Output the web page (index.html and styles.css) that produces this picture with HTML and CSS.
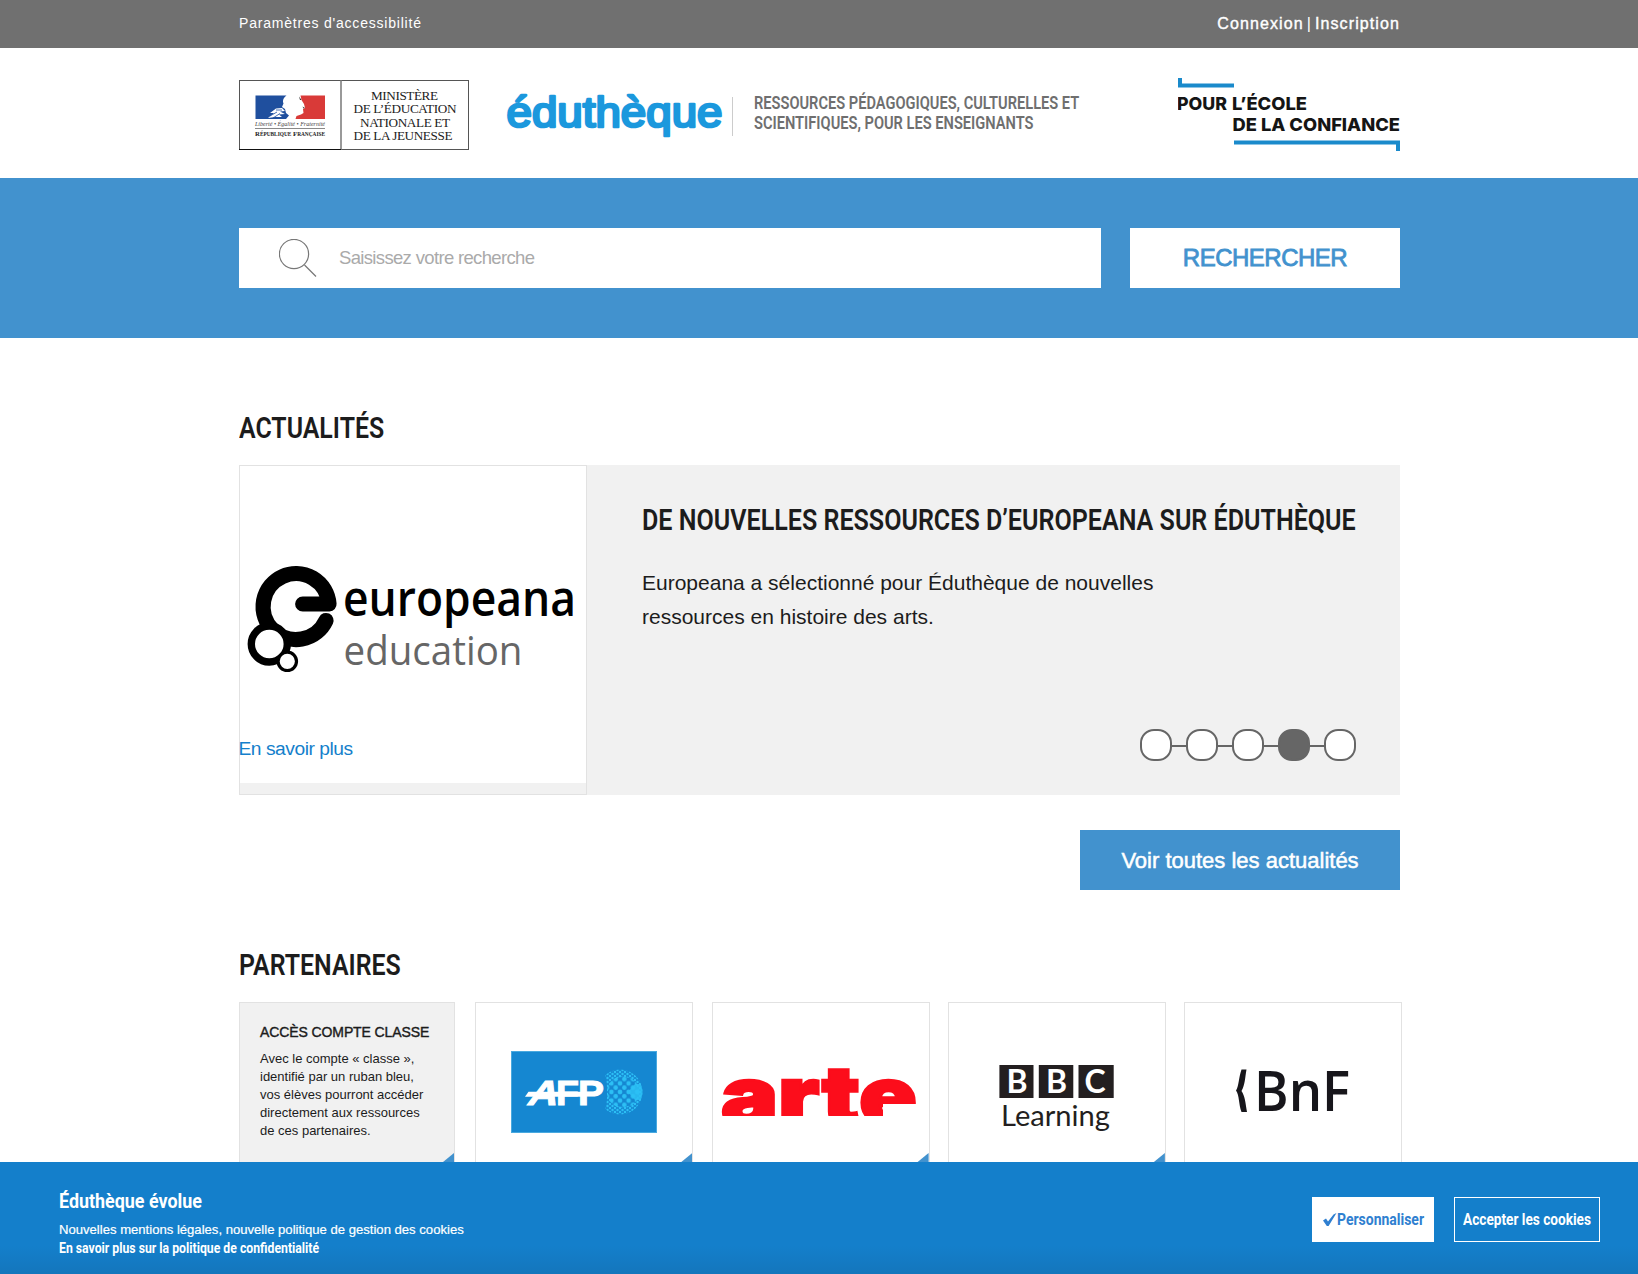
FILE: index.html
```html
<!DOCTYPE html>
<html lang="fr">
<head>
<meta charset="utf-8">
<title>Éduthèque</title>
<link rel="stylesheet" href="styles.css">
</head>
<body>
<div class="topbar">
  <div class="wrap topbar-row">
    <a class="access">Paramètres d'accessibilité</a>
    <div class="account"><a>Connexion</a><span class="bar">|</span><a>Inscription</a></div>
  </div>
</div>

<header class="wrap header">
  <svg class="ministry" width="230" height="70" viewBox="0 0 230 70">
    <rect x=".5" y=".5" width="229" height="69" fill="#fff" stroke="#555"/>
    <path d="M102 0V70" stroke="#777" stroke-width="1.500" fill="none"/>
    <path d="M0 69.500H102" stroke="#111"/>
    <path d="M16.500 15.500H47.500C44 18 43.500 21 44.500 23.500L43 27L46 29L47 33L50 35.500L47 39H16.500Z" fill="#1f4f9e"/>
    <path d="M86 15.500H61.500L62.500 20L65 24L66 28L64 29L64.500 33L62 34.500L57.500 36L56.500 39H86Z" fill="#d93a38"/>
    <path d="M29 38L35 33L31 33L37 28.500L43 28L46 31L41 31.500L46 34L40 34.500L43 37L36 37Z" fill="#fff"/>
    <path d="M31 36L38 32M34 38L41 33.500M37 30L43 30" stroke="#1f4f9e" stroke-width=".8"/>
    <path d="M60 16.500L62.500 20L61 20ZM63.500 26.500L66 28L64.500 28.500Z" fill="#333"/>
    <text class="serif" x="16" y="45.500" font-size="5.500" font-style="italic" textLength="70" lengthAdjust="spacingAndGlyphs" fill="#444">Liberté • Égalité • Fraternité</text>
    <path d="M16 48.500H86" stroke="#888"/>
    <text class="serif" x="16" y="56" font-weight="700" font-size="7" textLength="70" lengthAdjust="spacingAndGlyphs" fill="#222">R<tspan font-size="5.500">ÉPUBLIQUE</tspan> F<tspan font-size="5.500">RANÇAISE</tspan></text>
    <g class="serif" font-size="13.200" fill="#1c1c1c">
      <text x="132" y="20" textLength="67">MINISTÈRE</text>
      <text x="114.500" y="33.300" textLength="103">DE L’ÉDUCATION</text>
      <text x="121" y="46.500" textLength="90">NATIONALE ET</text>
      <text x="114.500" y="59.500" textLength="99">DE LA JEUNESSE</text>
    </g>
  </svg>
  <svg class="brand" width="220" height="64" viewBox="0 0 220 64">
    <text class="round" x="2.500" y="49" font-size="42" textLength="216" lengthAdjust="spacingAndGlyphs">éduthèque</text>
  </svg>
  <span class="separator"></span>
  <p class="tagline"><span>RESSOURCES PÉDAGOGIQUES, CULTURELLES ET</span><span>SCIENTIFIQUES, POUR LES ENSEIGNANTS</span></p>
  <svg class="trust" width="222" height="74" viewBox="0 0 222 74">
    <path d="M0 0H4V5.500H56V9.500H0Z" fill="#1a8acb"/>
    <path d="M56 62.500H222V73H218V66.500H56Z" fill="#1a8acb"/>
    <g class="inter" font-size="17.500" font-weight="800" fill="#151515">
      <text x="-1" y="31.500" textLength="50" lengthAdjust="spacingAndGlyphs">POUR</text>
      <text x="54" y="31.500" textLength="75" lengthAdjust="spacingAndGlyphs">L’ÉCOLE</text>
      <text x="54.500" y="53" textLength="167.500" lengthAdjust="spacingAndGlyphs">DE LA CONFIANCE</text>
    </g>
  </svg>
</header>

<section class="search">
  <div class="wrap search-row">
    <div class="field">
      <svg width="38" height="38" viewBox="0 0 38 38" fill="none" stroke="#777" stroke-width="1.200"><circle cx="15" cy="15" r="14.600"/><path d="M25.500 26L37 37.500"/></svg>
      <span class="placeholder">Saisissez votre recherche</span>
    </div>
    <button class="go">RECHERCHER</button>
  </div>
</section>

<main class="wrap">
  <h2 class="heading first">ACTUALITÉS</h2>
  <article class="news">
    <div class="news-media">
      <div class="news-picture">
        <svg width="346" height="270" viewBox="0 0 346 270">
          <path d="M86 154.500A33 33 0 1 1 89 138H62.700" fill="none" stroke="#000" stroke-width="15.200" stroke-linecap="round" stroke-linejoin="round"/>
          <circle cx="29.300" cy="178" r="18" fill="#fff" stroke="#000" stroke-width="7.400"/>
          <circle cx="47.300" cy="195.300" r="9.200" fill="#fff" stroke="#000" stroke-width="3.200"/>
          <text class="opensans" x="103" y="149.500" font-size="48" font-weight="600" textLength="233" lengthAdjust="spacingAndGlyphs">europeana</text>
          <text class="opensans" x="103.500" y="199" font-size="41" font-weight="500" fill="#666" textLength="179" lengthAdjust="spacingAndGlyphs">education</text>
        </svg>
        <a class="more">En savoir plus</a>
      </div>
    </div>
    <div class="news-body">
      <h3 class="news-title">DE NOUVELLES RESSOURCES D’EUROPEANA SUR ÉDUTHÈQUE</h3>
      <p class="news-text">Europeana a sélectionné pour Éduthèque de nouvelles<br>ressources en histoire des arts.</p>
      <div class="dots"><i></i><b></b><i></i><b></b><i></i><b></b><i class="on"></i><b></b><i></i></div>
    </div>
  </article>
  <div class="all"><a class="all-link">Voir toutes les actualités</a></div>

  <h2 class="heading">PARTENAIRES</h2>
  <div class="partners">
    <div class="card intro ribbon">
      <h4>ACCÈS COMPTE CLASSE</h4>
      <p>Avec le compte « classe »,<br>identifié par un ruban bleu,<br>vos élèves pourront accéder<br>directement aux ressources<br>de ces partenaires.</p>
    </div>
    <div class="card ribbon">
      <svg width="216" height="160" viewBox="0 0 216 160">
        <defs>
          <pattern id="dots" width="8.600" height="8.600" patternUnits="userSpaceOnUse" x="144" y="89">
            <g fill="#2cc0f5"><circle cx="4.300" cy="4.300" r="2.300"/><circle cx="0" cy="0" r="2.300"/><circle cx="8.600" cy="0" r="2.300"/><circle cx="0" cy="8.600" r="2.300"/><circle cx="8.600" cy="8.600" r="2.300"/></g>
          </pattern>
          <pattern id="fine" width="5" height="4" patternUnits="userSpaceOnUse" x="144" y="89">
            <g fill="#2cc0f5"><circle cx="2.500" cy="2" r="1.200"/><circle cx="0" cy="0" r="1.200"/><circle cx="5" cy="0" r="1.200"/><circle cx="0" cy="4" r="1.200"/><circle cx="5" cy="4" r="1.200"/></g>
          </pattern>
          <clipPath id="globe"><path d="M128 60H170V118H128L131 95V84Z"/></clipPath>
        </defs>
        <rect x="35.500" y="48.500" width="145" height="81" fill="#1587d1" stroke="#49a9df"/>
        <g clip-path="url(#globe)">
          <circle cx="144" cy="89" r="22.500" fill="url(#fine)"/>
          <circle cx="147" cy="89" r="15" fill="#1587d1"/>
          <circle cx="147" cy="89" r="16" fill="url(#dots)"/>
        </g>
        <path d="M152 89L159 81H164.500Q168.500 89 164.500 97H159Z" fill="#2cc0f5" opacity=".85"/>
        <path d="M49 93.700L52.500 88.700H110V93.700Z" fill="#fff"/>
        <g class="sans" fill="#fff" stroke="#fff" font-weight="700" font-size="35">
          <text transform="translate(50 101.500) skewX(-18)" textLength="30" lengthAdjust="spacingAndGlyphs">A</text>
          <text x="80" y="101.500" textLength="23" lengthAdjust="spacingAndGlyphs">F</text>
          <text x="102" y="101.500" textLength="26" lengthAdjust="spacingAndGlyphs">P</text>
        </g>
      </svg>
    </div>
    <div class="card ribbon">
      <svg width="216" height="160" viewBox="0 0 216 160">
        <clipPath id="cut"><path d="M0 0H216V101H170V113H0Z"/></clipPath>
        <g clip-path="url(#cut)"><text class="inter" x="8" y="121" font-size="80" font-weight="900" fill="#fc0d1b" stroke="#fc0d1b" stroke-width="2.500" textLength="196" lengthAdjust="spacingAndGlyphs">arte</text></g>
      </svg>
    </div>
    <div class="card ribbon">
      <svg width="216" height="160" viewBox="0 0 216 160">
        <path d="M50.400 62H84.500V95H50.400ZM89.800 62H124.300V95H89.800ZM129.500 62H164.700V95H129.500Z" fill="#231f20"/>
        <g class="lato" font-weight="700" font-size="32" fill="#fff" text-anchor="middle">
          <text x="68" y="90.300">B</text><text x="107.500" y="90.300">B</text><text x="146" y="90.300">C</text>
        </g>
        <text class="lato" x="52" y="122.500" font-size="29" fill="#231f20" textLength="109" lengthAdjust="spacingAndGlyphs">Learning</text>
      </svg>
    </div>
    <div class="card">
      <svg width="216" height="160" viewBox="0 0 216 160">
        <path d="M61.500 66.500H56.500C53.500 75 54 83 51 87.500C54.500 92 53.500 101 56.500 109H62C60.500 100 60 93 56.500 88C60 82 60 75 61.500 66.500Z" fill="#17161b"/>
        <text class="opensans" x="69" y="108" font-size="56" font-weight="600" fill="#17161b" textLength="96" lengthAdjust="spacingAndGlyphs">BnF</text>
      </svg>
    </div>
  </div>
</main>

<footer class="cookies">
  <div class="cookies-text">
    <strong class="cookies-title">Éduthèque évolue</strong>
    <span class="cookies-line">Nouvelles mentions légales, nouvelle politique de gestion des cookies</span>
    <a class="cookies-link">En savoir plus sur la politique de confidentialité</a>
  </div>
  <div class="cookies-actions">
    <button class="btn solid"><svg width="14" height="14" viewBox="0 0 14 14"><path d="M0 7.500L3 5.500L5 8.500L10.500 1.500L13.500 0L5.600 13H3.800Z" fill="#2f7fd0"/></svg><span class="customize">Personnaliser</span></button>
    <button class="btn outline"><span class="accept">Accepter les cookies</span></button>
  </div>
</footer>
</body>
</html>
```
FILE: styles.css
```css
* { box-sizing: border-box; }
body { margin: 0; height: 1274px; overflow: hidden; background: #fff; color: #1c1c1c; font-family: "Liberation Sans", Arial, sans-serif; }
h2, h3, h4, p { margin: 0; font-weight: 400; }
button { font: inherit; border: 0; padding: 0; }
svg { display: block; flex-shrink: 0; }
.wrap { width: 1161px; margin: 0 0 0 239px; }

.sans { font-family: "Liberation Sans", sans-serif; }
.serif { font-family: "Liberation Serif", serif; }
.inter { font-family: Inter, sans-serif; }
.lato { font-family: Lato, sans-serif; }
.opensans { font-family: "Open Sans", sans-serif; }
.round { font-family: "Liberation Sans", sans-serif; fill: #1b98dd; stroke: #1b98dd; stroke-width: 2.6; stroke-linejoin: round; }

.topbar { height: 48px; background: #707070; color: #fff; }
.topbar-row { display: flex; justify-content: space-between; align-items: center; height: 46px; }
.access { font-size: 14px; letter-spacing: .79px; }
.account { display: flex; font-size: 16px; letter-spacing: 1.1px; padding-top: 1px; -webkit-text-stroke: .4px; }
.bar { margin: 0 3px; -webkit-text-stroke: 0; }

.header { display: flex; height: 130px; padding-top: 30px; }
.ministry { margin-top: 2px; }
.brand { margin-left: 35px; }
.separator { width: 1px; height: 39px; margin: 19px 0 0 8px; background: #ccc; }
.tagline { margin: 15px 0 0 21px; width: 330px; font: 600 18px/20px Roboto, sans-serif; color: #6f6f6f; white-space: nowrap; }
.tagline span { display: block; transform: scaleX(.813); transform-origin: left; }
.trust { margin-left: auto; }

.search { height: 160px; padding-top: 50px; background: #4292ce; }
.search-row { display: flex; justify-content: space-between; }
.field { display: flex; align-items: center; gap: 22px; width: 862px; height: 60px; padding-left: 40px; background: #fff; }
.placeholder { font-size: 18.5px; letter-spacing: -.66px; color: #aaa; }
.go { width: 270px; height: 60px; background: #fff; color: #4292ce; font-size: 24px; letter-spacing: -.5px; -webkit-text-stroke: .8px; }

.heading { margin: 60px 0 22px; font: 600 30px/30px Roboto, sans-serif; transform: scaleX(.83); transform-origin: left; }
.heading.first { margin-top: 75px; }

.news { display: flex; height: 330px; background: #f1f1f1; }
.news-media { flex: none; width: 348px; border: 1px solid #e2e2e2; }
.news-picture { height: 317px; background: #fff; }
.more { display: block; margin-left: -1.5px; font-size: 19.2px; line-height: 25px; letter-spacing: -.45px; color: #147fcb; }
.news-body { display: flex; flex: 1; min-width: 0; flex-direction: column; padding: 40px 44px 34px 55px; }
.news-title { font: 600 30px/30px Roboto, sans-serif; white-space: nowrap; transform: scaleX(.836); transform-origin: left; width: 852px; }
.news-text { margin-top: 31px; font-size: 21px; line-height: 34px; }
.dots { display: flex; align-items: center; align-self: flex-end; margin-top: auto; }
.dots i { width: 32px; height: 32px; border: 2px solid #666; border-radius: 14px; background: #fff; }
.dots i.on { background: #666; }
.dots b { width: 14px; height: 2px; margin-top: 2px; background: #666; }

.all { display: flex; justify-content: flex-end; margin-top: 35px; }
.all-link { width: 320px; height: 60px; background: #4292ce; color: #fff; font-size: 22px; line-height: 61px; text-align: center; -webkit-text-stroke: .5px; }

.partners { display: grid; grid-template-columns: repeat(5, 218px); column-gap: 18.3px; }
.card { position: relative; height: 218px; border: 1px solid #e2e2e2; }
.ribbon::after { content: ""; position: absolute; top: 150px; right: 0; width: 44px; height: 36px; background: #4292ce; clip-path: polygon(100% 0, 100% 100%, 0 100%); }
.intro { width: 216px; padding: 20px; background: #f1f1f1; white-space: nowrap; }
.intro h4 { font-size: 14px; line-height: 18px; letter-spacing: -.1px; -webkit-text-stroke: .4px; }
.intro p { margin-top: 9px; font-size: 13px; line-height: 18px; }

.cookies { position: fixed; right: 0; bottom: 0; left: 0; display: flex; justify-content: space-between; height: 112px; padding: 27px 38px 0 59px; background: linear-gradient(#147fcb 75%, #1476bc); color: #fff; }
.cookies-text { display: flex; flex-direction: column; white-space: nowrap; }
.cookies-title { font: 700 21px/24px Roboto, sans-serif; transform: scaleX(.852); transform-origin: left; }
.cookies-line { margin-top: 8px; font-size: 13.1px; line-height: 18px; -webkit-text-stroke: .2px; }
.cookies-link { font: 700 14px/18px Roboto, sans-serif; transform: scaleX(.875); transform-origin: left; }
.cookies-actions { display: flex; gap: 20px; margin-top: 8px; }
.btn { display: flex; align-items: center; height: 45px; font: 700 16px/20px Roboto, sans-serif; white-space: nowrap; }
.btn span { transform-origin: left; }
.solid { width: 122px; padding-left: 11px; background: #fff; color: #2f7fd0; }
.outline { width: 146px; padding-left: 8px; border: 1px solid #fff; background: transparent; color: #fff; }
.customize { width: 87px; transform: scaleX(.873); }
.accept { width: 128px; transform: scaleX(.853); }
```
